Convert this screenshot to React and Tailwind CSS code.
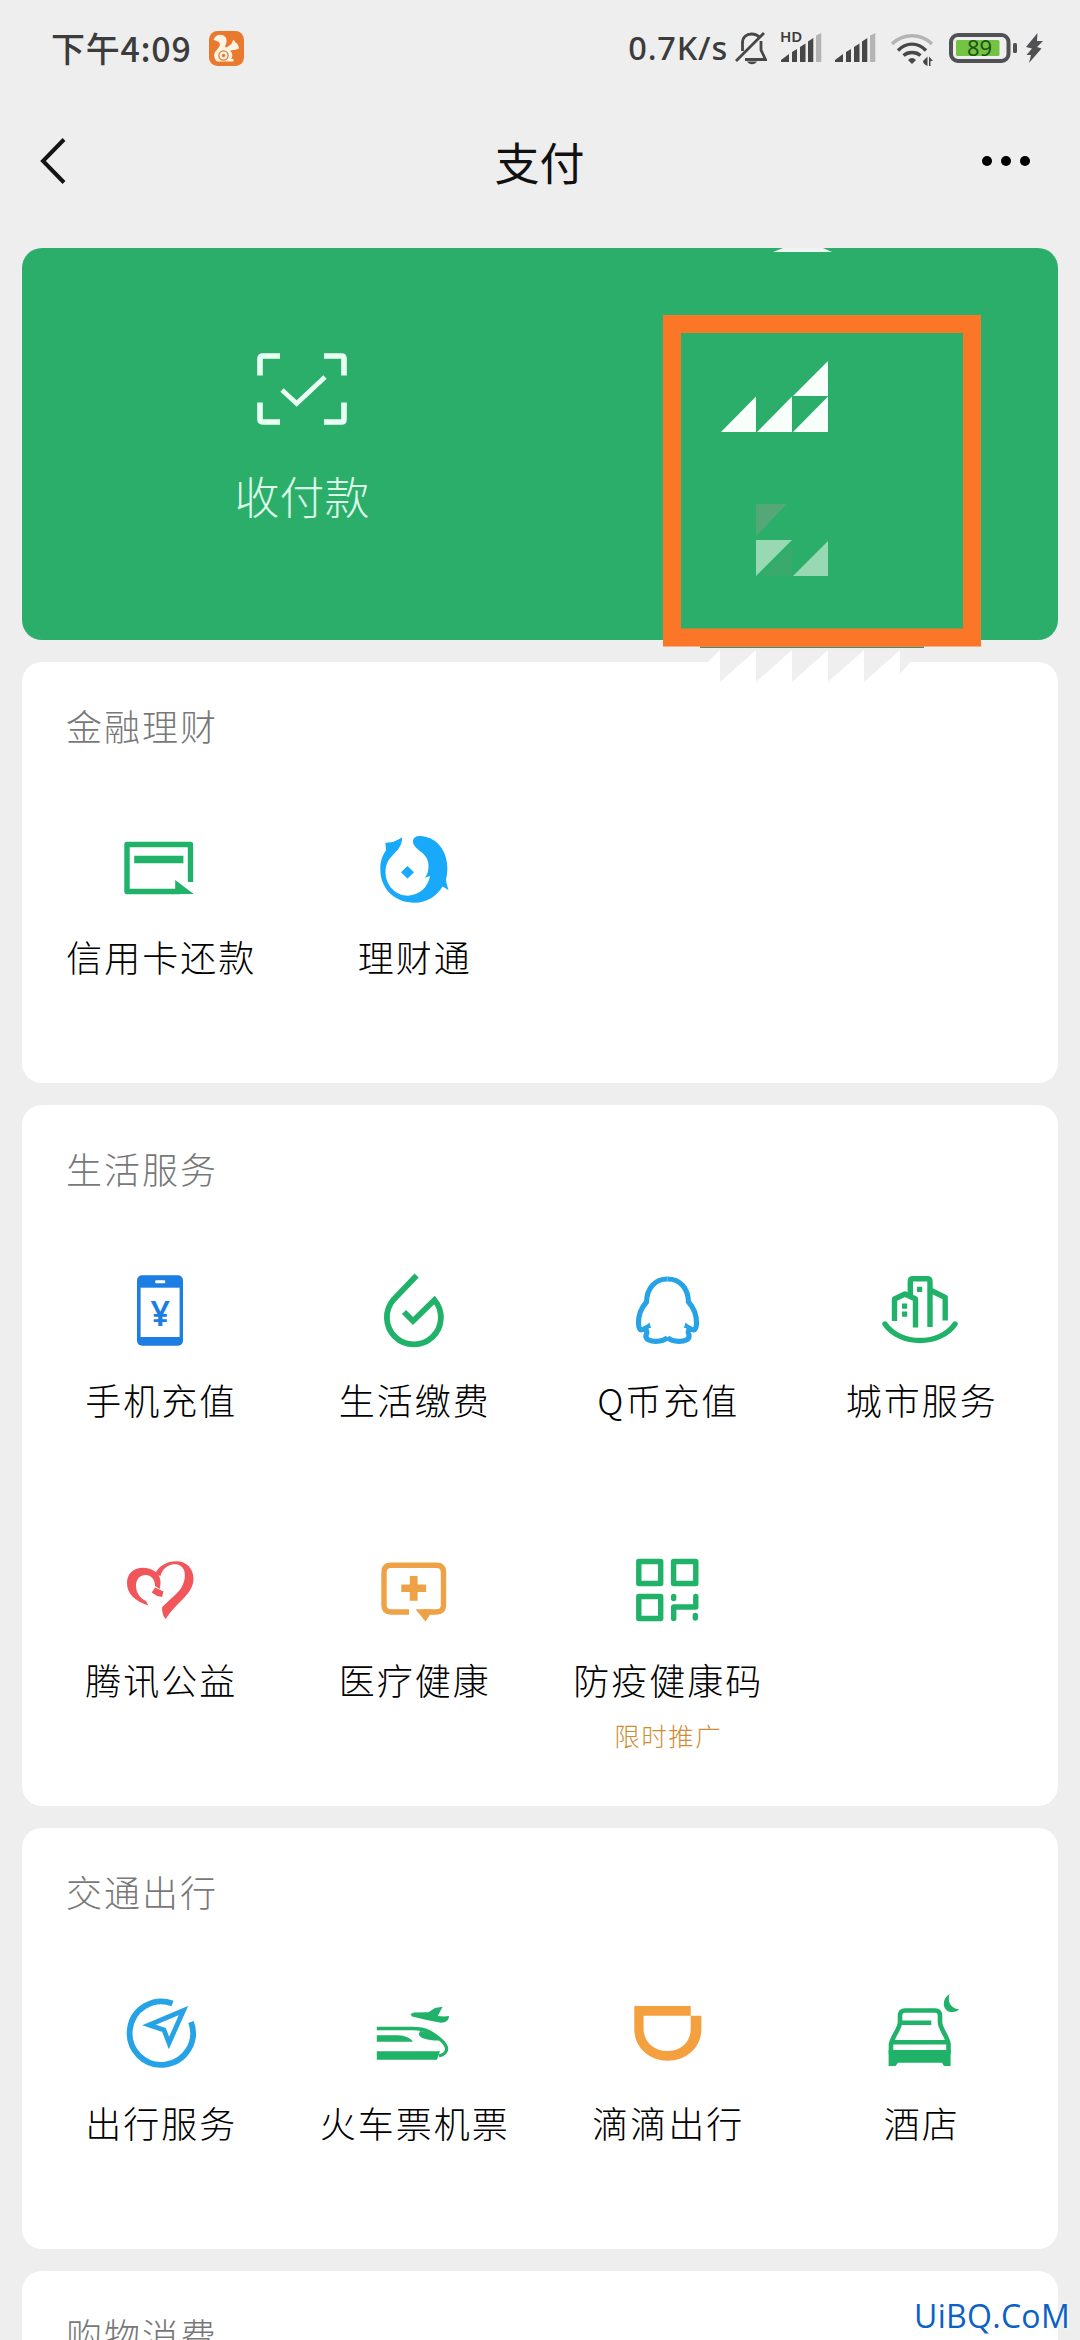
const GREEN = "#1fb268";
const BLUE = "#25a3e6";
const ORANGE = "#eea145";

function CardIcon() {
  return (
    <svg viewBox="0 0 80 80" className="w-20 h-20" fill="none">
      <path d="M70.500 54V16.500H7V63.500H60" stroke={GREEN} strokeWidth="5.400" strokeLinejoin="round" />
      <path d="M14.200 27.700H63.400V35.300H14.200ZM55.200 52L73 65.400V66H55.200Z" fill={GREEN} />
    </svg>
  );
}

function FishIcon() {
  return (
    <svg viewBox="0 0 80 80" className="w-20 h-20" fill="#18a9fa">
      <path d="M12.400 14.700C20 15 25 12 29 9.300C29.500 17 25 22 19 28C14 33 12.500 38 12.500 45C13 57 22 67.700 35 67.700C47 67 55 59 57 48L52 49.700C55 46 55.500 42 55.500 37C55 28 49 25 44 20.500C37 14 40 8 47 8C62 8.500 72 20 74 35C74.800 42 74 48 73 51C73 55 74.500 58 75.500 62L69.500 58.500C64 68 54 74.700 41.500 74.700C23 74.700 7.300 62 7.300 41C7.300 33 9.500 27 13 22.500Z" />
      <path d="M34.500 38L41 44.300L34.500 50.600L28 44.300Z" />
    </svg>
  );
}

function PhoneIcon() {
  return (
    <svg viewBox="0 0 80 80" className="w-20 h-20">
      <rect x="17" y="4.300" width="46" height="70.400" rx="5" fill="#1c7ee2" />
      <rect x="20.600" y="16.700" width="39" height="49.300" fill="#fff" />
      <rect x="35.200" y="9.300" width="10" height="3" rx="1" fill="#fff" />
      <text x="40.300" y="55" textAnchor="middle" fontSize="34" fontWeight="600" fontFamily="'Noto Sans', sans-serif" fill="#1c7ee2">¥</text>
    </svg>
  );
}

function DropIcon() {
  return (
    <svg viewBox="0 0 80 80" className="w-20 h-20" fill="none" stroke={GREEN} strokeWidth="5.800">
      <path d="M43.600 4.500L20.500 28.700A27 27 0 1 0 61.500 29L40 50L31 41" />
    </svg>
  );
}

function PenguinIcon() {
  return (
    <svg viewBox="0 0 80 80" className="w-20 h-20" fill="none" stroke={BLUE} strokeWidth="5.200">
      <path d="M40.500 8C28 8 20 17 19.500 31C14 37 11.500 44 11.500 52C11.500 57 13 60 16 58.500L21 56M17 58C21 60 20 62 19 64C18 69 24 70.300 29 70.300C35 70.300 38 69 40.500 66.500" />
      <path d="M40.500 8C53 8 61 17 61.500 31C67 37 69.500 44 69.500 52C69.500 57 68 60 65 58.500L60 56M64 58C60 60 61 62 62 64C63 69 57 70.300 52 70.300C46 70.300 43 69 40.500 66.500" />
      <path d="M16 57L22.500 51.500L24 57ZM65 57L58.500 51.500L57 57Z" fill={BLUE} stroke="none" />
    </svg>
  );
}

function CityIcon() {
  return (
    <svg viewBox="0 0 80 80" className="w-20 h-20" fill="none" stroke={GREEN} strokeWidth="5.400">
      <path d="M5 53C20 75 60 75 75 53" strokeLinecap="round" />
      <path d="M14.500 50V28L25 23L35.500 28V56.500M30.300 25V10.500Q30.300 7.800 33 7.800H47.300Q50 7.800 50 10.500V56M50 19L65.200 26.500V49.500" strokeLinejoin="round" />
      <path d="M37 15.700h5.200v5.200H37ZM22 32.500h5.200v5.200H22ZM22 40.500h5.200v5.200H22Z" fill={GREEN} stroke="none" />
    </svg>
  );
}

function HeartIcon() {
  return (
    <svg viewBox="0 0 80 80" className="w-20 h-20" fill="#f1565a">
      <path d="M28.500 54.500C15 50 7 43 7 32C7 22 14 16.700 23 16.700C32 16.700 40.500 22 40.500 31L40 38L35 35C35 28 31 24 25.500 24C19 24 16 29 16 35C16 42 21 48 26 50Z" />
      <path d="M31.700 41.500L35 36.500L43.500 40.500L42 46L37 45Z" />
      <path d="M35.200 23.300C38 15 47 10.300 56 10.300C67 10.300 73.500 18 73.500 28C73.500 37 67 44 61 50C54 57 49 62 46 68C43 66 42 60 42 56.500C48 50 56 44 60.500 38C64.500 32 66 25 64 19C62 14 57 12.500 52 13.500C46 15 42 19 40.500 25Z" />
    </svg>
  );
}

function MedicalIcon() {
  return (
    <svg viewBox="0 0 80 80" className="w-20 h-20" fill="none">
      <path d="M36 61H18Q11 61 11 54V21.200Q11 14.200 18 14.200H63.500Q70.500 14.200 70.500 21.200V54Q70.500 61 63.500 61H50" stroke={ORANGE} strokeWidth="5.400" />
      <path d="M42.500 58.300H58V62L52.500 70.500ZM36.800 25h7.800v8.500h8.500v7.600h-8.500v8.600h-7.800v-8.600h-8.500v-7.600h8.500Z" fill={ORANGE} />
    </svg>
  );
}

function QrIcon() {
  return (
    <svg viewBox="0 0 80 80" className="w-20 h-20" fill="none" stroke={GREEN} strokeWidth="5.400" strokeLinejoin="round">
      <path d="M11.800 10.500H33.700V32.500H11.800ZM46.600 10.500H68.800V32.500H46.600ZM11.800 45.500H33.700V67.500H11.800Z" />
      <path d="M46.700 67.500V56H68.800V45.500M46.700 45.500V47.500M68.300 64.500V67" strokeLinecap="round" strokeWidth="5.400" />
    </svg>
  );
}

function CompassIcon() {
  return (
    <svg viewBox="0 0 80 80" className="w-20 h-20" fill="none" stroke={BLUE}>
      <path d="M52.500 9.500A31.700 31.700 0 1 0 71 28" strokeWidth="5.800" />
      <path d="M63.500 16.500L29 31L44 36L49 49Z" strokeWidth="4.800" strokeMiterlimit="12" />
    </svg>
  );
}

function TrainIcon() {
  return (
    <svg viewBox="0 0 80 80" className="w-20 h-20" fill={GREEN}>
      <path d="M3.800 34.500H40C53 34.500 60 39 68 46C76 53 75.500 59.500 66 62" fill="none" stroke={GREEN} strokeWidth="3.300" />
      <path d="M3.800 41.300H25C32 41.500 37 44 40 47.700H3.800ZM3.800 57.300H67L64 65.700H3.800ZM47 37C53 37 61 40 67 46.500C57 47 46 44.500 45.800 40Z" />
      <path d="M37.500 20L41 18.500L55.500 18.300L62 14L69.600 12.700L64.800 22L71 22.500L76 22C76 26 73 28.700 68 28.700L53.700 26L39 22.500Z" />
    </svg>
  );
}

function CupIcon() {
  return (
    <svg viewBox="0 0 80 80" className="w-20 h-20" fill="#f5a03f">
      <path d="M7.300 12H63.700V21.700H16.600V35C16.600 48 27 57 40.500 57S63.700 48 63.700 35V21.700H74.400V35C74.400 54 59 66.700 40.800 66.700S7.300 54 7.300 35Z" />
    </svg>
  );
}

function BedIcon() {
  return (
    <svg viewBox="0 0 80 80" className="w-20 h-20" fill="none" stroke={GREEN} strokeWidth="4.600">
      <path d="M11 60V50C13 41 20 35 20 28V22Q20 16.500 25 16.500H55Q60 16.500 60 22V28C60 35 67 41 68.500 50V60M20 28.700H51.300M12 48.300H67" />
      <path d="M8.600 56H70.600V72H64L62 68.700H18L15.500 72H8.600ZM69.500 0C61 5 62 18 72.500 18C75.500 18 78 17 79 15C71.500 15 67 8 69.500 0Z" fill={GREEN} stroke="none" />
    </svg>
  );
}

const sections = [
  {
    title: "金融理财",
    items: [
      { label: "信用卡还款", icon: CardIcon },
      { label: "理财通", icon: FishIcon },
    ],
  },
  {
    title: "生活服务",
    items: [
      { label: "手机充值", icon: PhoneIcon },
      { label: "生活缴费", icon: DropIcon },
      { label: "Q币充值", icon: PenguinIcon },
      { label: "城市服务", icon: CityIcon },
      { label: "腾讯公益", icon: HeartIcon },
      { label: "医疗健康", icon: MedicalIcon },
      { label: "防疫健康码", icon: QrIcon, note: "限时推广" },
    ],
  },
  {
    title: "交通出行",
    items: [
      { label: "出行服务", icon: CompassIcon },
      { label: "火车票机票", icon: TrainIcon },
      { label: "滴滴出行", icon: CupIcon },
      { label: "酒店", icon: BedIcon },
    ],
  },
  { title: "购物消费", items: [] },
];

function Signal() {
  return (
    <svg viewBox="0 0 41 30" className="w-[41px] h-[30px]">
      <path d="M0 29V27L8 21V29ZM11 29V19L16 16V29ZM19 29V14L24.500 10.500V29ZM27 29V8.500L32.300 5V29Z" fill="#474747" />
      <path d="M35 29V2.500L40.300 0V29Z" fill="#b4b4b4" />
    </svg>
  );
}

function StatusBar() {
  return (
    <div className="h-[98px] pl-[51px] pr-[37px] flex items-center text-[#3c3c3c]">
      <span className="w-[141px] text-[34px] tracking-[0.700px] font-medium leading-none whitespace-nowrap -mt-[2px]">下午4:09</span>
      <svg viewBox="0 0 35 35" className="w-[35px] h-[35px] ml-[17px] -mt-[2px]">
        <rect width="35" height="35" rx="8.500" fill="#e9792d" />
        <path d="M4.500 9C6 4 11 2.500 14.500 4.500C18.500 7 18 11 16.500 14C15.500 16.500 17 17 19 15.500C21 14 23 13.500 23.500 10L25 9L26.500 11.500C29 12.500 29.500 15 30 17.500C27 19.500 23 18.500 21 20C24 22 24 26 22 28H24.500V30.500H8C4.500 27 4 22.500 8 18.500C11 15.500 12 13 9.500 11C8 9.500 6 9.500 4.500 9Z" fill="#fff3e4" />
        <circle cx="14.500" cy="24.500" r="4.600" fill="none" stroke="#e9792d" strokeWidth="1.300" />
        <circle cx="14.500" cy="24.500" r="1.700" fill="#e9792d" />
      </svg>
      <div className="ml-auto flex items-center -mt-[2px]">
        <span className="text-[32.500px] tracking-[0.800px] leading-none font-medium font-['Noto_Sans']">0.7K/s</span>
        <svg viewBox="0 0 32 33" className="w-8 h-[33px] ml-[7px]" fill="none" stroke="#474747" strokeWidth="2.800">
          <path d="M1 29L29 1M7.500 19V11C7.500 5 11.500 2 16.500 2C20 2 22.500 3 24.500 5.500M26 9V18L30.500 27.500H10" />
          <path d="M12 29.500H22C20 33 14 33 12 29.500Z" fill="#474747" stroke="none" />
        </svg>
        <div className="relative ml-[14px]">
          <Signal />
          <span className="absolute -top-[3px] -left-[1px] text-[15px] leading-[13px] font-semibold font-['Noto_Sans']">HD</span>
        </div>
        <div className="ml-[13px]">
          <Signal />
        </div>
        <svg viewBox="0 0 43 34" className="w-[43px] h-[34px] ml-[15px] mt-1" fill="none" strokeWidth="3.400">
          <path d="M1 11C12 0 30 0 41 11" stroke="#b4b4b4" />
          <path d="M7 17.500C15 9 27 9 35 17.500M12.500 22.500C17 18.500 25 18.500 29.500 22.500" stroke="#474747" />
          <path d="M17 27Q21 23 25 27L21 31ZM32 28L36.500 23.500V33Q32 31 32 28ZM38 23.500L42 28H39.500V33H38Z" fill="#474747" />
        </svg>
        <svg viewBox="0 0 70 30" className="w-[70px] h-[30px] ml-[15px]">
          <rect x="2" y="2" width="57.500" height="26" rx="7" fill="none" stroke="#515154" strokeWidth="4" />
          <rect x="7" y="7" width="43.500" height="16" rx="1.500" fill="#74c444" />
          <rect x="64" y="10" width="4" height="10" rx="1.500" fill="#515154" />
          <text x="30.500" y="23" textAnchor="middle" fontSize="22" fontFamily="'Noto Sans', sans-serif" fill="#1f5214">89</text>
        </svg>
        <svg viewBox="0 0 18 30" className="w-[18px] h-[30px] ml-[6px]" fill="#515154">
          <path d="M12.500 0L1 14L7 15.500L1.500 22L6 22L4 30L16.500 15.500L12 14L18 8L12 8Z" />
        </svg>
      </div>
    </div>
  );
}

function NavBar() {
  return (
    <div className="h-[126px] pl-10 pr-[50px] flex items-center justify-between text-black">
      <svg viewBox="0 0 50 46" className="w-[50px] h-[46px]" fill="none" stroke="#141414" strokeWidth="4">
        <path d="M24 1.500L3 23L24 44.500" />
      </svg>
      <h1 className="pl-[7px] text-[45px] font-normal leading-none text-[#111]">支付</h1>
      <div className="flex gap-[9px]">
        <span className="w-[10px] h-[10px] rounded-full bg-black" />
        <span className="w-[10px] h-[10px] rounded-full bg-black" />
        <span className="w-[10px] h-[10px] rounded-full bg-black" />
      </div>
    </div>
  );
}

function PayCard() {
  return (
    <div className="relative h-[392px] rounded-[20px] bg-[#2aae6a] flex">
      <div className="w-[560px] pt-[105px] flex flex-col items-center">
        <svg viewBox="0 0 90 72" className="w-[90px] h-[72px]" fill="none" stroke="#e9fff3" strokeWidth="5.600">
          <path d="M3 22.500V5.500Q3 3 5.500 3H23M67 3H84.500Q87 3 87 5.500V22.500M87 49.500V66.500Q87 69 84.500 69H67M23 69H5.500Q3 69 3 66.500V49.500" />
          <path d="M25 37L39.700 50.500L68 24" strokeWidth="4.800" />
        </svg>
        <span className="mt-[43px] text-[45px] leading-[56px] font-light text-[#dcfbe9]">收付款</span>
      </div>

      {/* broken tiles and the highlight frame over the right half */}
      <svg viewBox="640 248 418 440" className="absolute right-0 top-0 z-10 w-[418px] h-[440px]">
        <path d="M773 252L783 248H823L832 252Z" fill="#f1f5f2" />
        <path d="M721 432L756 396.500V432ZM757 432L792 396.500V432ZM793 432L828 396.500V432ZM793 396L828 361V396Z" fill="#f8fffb" />
        <path d="M756 504H787L756 536Z" fill="#54a877" />
        <path d="M761 576L792 545V576Z" fill="#3aaa6c" />
        <path d="M756 540H792L756 576ZM793 576L828 541V576Z" fill="#98d9b4" />
        <path d="M720 661H900V684H720Z" fill="#fff" />
        <path d="M708 662L720 650V662Z" fill="#fff" />
        <path d="M720 650H756L720 682ZM756 650H792L756 682ZM792 650H828L792 682ZM828 650H864L828 682ZM864 650H900L864 682ZM900 650L912 660L900 674Z" fill="#f0efef" />
        <path d="M756 650V662H742.500ZM792 650V662H778.500ZM828 650V662H814.500ZM864 650V662H850.500ZM900 650V662H886.500Z" fill="#fff" />
        <rect x="672" y="324" width="300" height="313.500" fill="none" stroke="#fb7626" strokeWidth="18" />
        <rect x="700" y="646.500" width="224" height="1.500" fill="#7a7a45" />
      </svg>
    </div>
  );
}

function Section({ title, items }) {
  return (
    <section className="rounded-[20px] bg-white px-[11px] shrink-0">
      <h2 className="h-[141px] pt-[36px] pl-[33px] text-[36px] leading-[54px] tracking-[2px] font-light text-[#787878]">
        {title}
      </h2>
      <div className="grid grid-cols-4">
        {items.map(({ label, icon: Icon, note }) => (
          <div key={label} className="h-[280px] pt-[25px] flex flex-col items-center">
            <Icon />
            <span className="mt-[21px] pl-[3px] text-[36px] leading-[54px] tracking-[2px] font-light text-black whitespace-nowrap">
              {label}
            </span>
            {note && (
              <span className="mt-[11px] pl-[3px] text-[25.500px] leading-9 tracking-[1.500px] font-light text-[#d08c33]">{note}</span>
            )}
          </div>
        ))}
      </div>
    </section>
  );
}

export default function App() {
  return (
    <div className="relative w-[1080px] h-[2340px] overflow-hidden bg-[#eeeeee] font-['Noto_Sans_CJK_SC',sans-serif]">
      <StatusBar />
      <NavBar />
      <main className="pt-6 px-[22px] flex flex-col gap-[22px]">
        <PayCard />
        {sections.map((section) => (
          <Section key={section.title} title={section.title} items={section.items} />
        ))}
      </main>
      <span className="absolute right-[10px] bottom-[3px] text-[32px] tracking-[0.300px] leading-[42px] font-medium text-[#0b62c6] font-['Open_Sans'] [text-shadow:0_0_3px_#fff]">
        UiBQ.CoM
      </span>
    </div>
  );
}
